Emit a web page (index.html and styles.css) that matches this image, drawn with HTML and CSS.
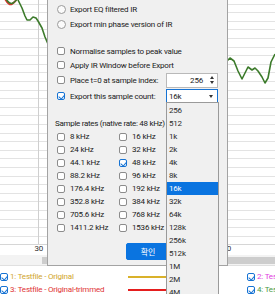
FILE: index.html
```html
<!DOCTYPE html>
<html lang="ko">
<head>
    <meta charset="UTF-8">
    <title>Export IR</title>
    <link rel="stylesheet" href="styles.css">
</head>
<body>
    <div class="app">
        <svg class="chart" width="275" height="255" viewBox="0 0 275 255">
            <path class="grid" d="M0 4.5H275M0 12.5H275M0 21.5H275M0 29.5H275M0 38.5H275M0 47.5H275M0 55.5H275M0 64.5H275M0 72.5H275M0 81.5H275M0 90.5H275M0 98.5H275M0 107.5H275M0 115.5H275M0 124.5H275M0 133.5H275M0 141.5H275M0 150.5H275M0 158.5H275M0 167.5H275M0 176.5H275M0 184.5H275M0 193.5H275M0 201.5H275M0 210.5H275M0 219.5H275M0 227.5H275M0 236.5H275"/>
            <path class="grid-v" d="M38.5 0V245"/>
            <path class="axis" d="M0 244.5H275"/>
            <path class="curve-red" d="M5 -1 Q9 6 12 4 T17 -1"/>
            <path class="curve" d="M6 -1 Q10 5 13 3 T17 -1 M18 0 L22 8 L25 16 L27 20 L30 20 L33 17 L36 18 L38 21 L42 28 L45 37 L48 44"/>
            <path class="curve" d="M226 62 L230 58 L234 61 L238 71 L242 79 L245 73 L248 67 L252 70 L255 68 L258 71 L262 77 L265 83 L268 78 L271 62 L275 54"/>
            <text class="tick" x="43" y="251" text-anchor="end">30</text>
            <text class="tick" x="231" y="251" text-anchor="end">40</text>
        </svg>
        <div class="scroll">
            <div class="scroll-thumb"></div>
        </div>
        <div class="legend">
            <div class="legend-item c1"><span class="box checked"></span>1: Testfile - Original</div>
            <div class="legend-line"><span class="swatch c1"></span></div>
            <div class="legend-item c2"><span class="box checked"></span>2: Testfile - Original</div>
            <div class="legend-item c3"><span class="box checked"></span>3: Testfile - Original-trimmed</div>
            <div class="legend-line"><span class="swatch c3"></span></div>
            <div class="legend-item c4"><span class="box checked"></span>4: Testfile - Original-trimmed</div>
        </div>

        <div class="dialog">
            <div class="row"><span class="ind"><span class="radio"></span></span>Export EQ filtered IR</div>
            <div class="row"><span class="ind"><span class="radio"></span></span>Export min phase version of IR</div>

            <div class="group">
                <div class="row"><span class="ind"><span class="box"></span></span>Normalise samples to peak value</div>
                <div class="row"><span class="ind"><span class="box"></span></span>Apply IR Window before Export</div>
                <div class="row field-row">
                    <span class="field-label"><span class="ind"><span class="box"></span></span>Place t=0 at sample index:</span>
                    <span class="spin">256<span class="spin-arrows"><span class="up"></span><span class="down"></span></span></span>
                </div>
                <div class="row field-row">
                    <span class="field-label"><span class="ind"><span class="box checked"></span></span>Export this sample count:</span>
                    <span class="combo">16k<span class="down"></span></span>
                </div>
            </div>

            <div class="rates-title">Sample rates (native rate: 48 kHz)</div>
            <div class="rates">
                <div class="rate"><span class="ind"><span class="box"></span></span>8 kHz</div>
                <div class="rate"><span class="ind"><span class="box"></span></span>16 kHz</div>
                <div class="rate"><span class="ind"><span class="box"></span></span>24 kHz</div>
                <div class="rate"><span class="ind"><span class="box"></span></span>32 kHz</div>
                <div class="rate"><span class="ind"><span class="box"></span></span>44.1 kHz</div>
                <div class="rate"><span class="ind"><span class="box checked"></span></span>48 kHz</div>
                <div class="rate"><span class="ind"><span class="box"></span></span>88.2 kHz</div>
                <div class="rate"><span class="ind"><span class="box"></span></span>96 kHz</div>
                <div class="rate"><span class="ind"><span class="box"></span></span>176.4 kHz</div>
                <div class="rate"><span class="ind"><span class="box"></span></span>192 kHz</div>
                <div class="rate"><span class="ind"><span class="box"></span></span>352.8 kHz</div>
                <div class="rate"><span class="ind"><span class="box"></span></span>384 kHz</div>
                <div class="rate"><span class="ind"><span class="box"></span></span>705.6 kHz</div>
                <div class="rate"><span class="ind"><span class="box"></span></span>768 kHz</div>
                <div class="rate"><span class="ind"><span class="box"></span></span>1411.2 kHz</div>
                <div class="rate"><span class="ind"><span class="box"></span></span>1536 kHz</div>
            </div>

            <div class="buttons">
                <button class="btn primary">확인</button>
                <button class="btn">취소</button>
            </div>
        </div>

        <div class="popup">
            <div class="item">256</div>
            <div class="item">512</div>
            <div class="item">1k</div>
            <div class="item">2k</div>
            <div class="item">4k</div>
            <div class="item">8k</div>
            <div class="item selected">16k</div>
            <div class="item">32k</div>
            <div class="item">64k</div>
            <div class="item">128k</div>
            <div class="item">256k</div>
            <div class="item">512k</div>
            <div class="item">1M</div>
            <div class="item">2M</div>
            <div class="item">4M</div>
        </div>
    </div>
</body>
</html>
```

FILE: styles.css
```css
* {
    box-sizing: border-box;
}
body {
    margin: 0;
    font-family: Roboto, "Noto Sans CJK KR", sans-serif;
    font-size: 8px;
    letter-spacing: -0.2px;
    color: #1a1a1a;
}
.app {
    position: relative;
    width: 275px;
    height: 294px;
    overflow: hidden;
    background: #fff;
}
.chart {
    display: block;
}
.grid {
    stroke: #e3e3e3;
    stroke-width: 1;
}
.grid-v {
    stroke: #cfcfcf;
    stroke-width: 1;
}
.axis {
    stroke: #d6d6d6;
}
.curve {
    fill: none;
    stroke: #3d7b2c;
    stroke-width: 1.6;
    stroke-linejoin: round;
}
.curve-red {
    fill: none;
    stroke: #d8322c;
    stroke-width: 1.8;
}
.tick {
    font-family: Roboto, sans-serif;
    font-size: 8px;
    fill: #333;
}
.scroll {
    height: 11px;
    padding: 2px 0 2px 42px;
    background: #f3f3f3;
    border-bottom: 1px solid #e0e0e0;
}
.scroll-thumb {
    height: 7px;
    background: #cdcdcd;
}
.legend {
    display: grid;
    grid-template-columns: 128px 119px 1fr;
    grid-auto-rows: 13px;
    padding-top: 4px;
    white-space: nowrap;
}
.legend-item {
    display: flex;
    align-items: center;
    gap: 2px;
}
.legend-line {
    display: flex;
    align-items: center;
}
.swatch {
    width: 72px;
    height: 2px;
}
.swatch.c1 { background: #d9b12a; }
.swatch.c3 { background: #e51e1e; }
.c1 { color: #d1a52c; }
.c2 { color: #e040e0; }
.c3 { color: #e03434; }
.c4 { color: #4c9a45; }

/* widgets */
.ind {
    width: 13px;
    flex: none;
    display: flex;
    align-items: center;
}
.radio {
    width: 9px;
    height: 9px;
    border: 1px solid #9a9a9a;
    border-radius: 50%;
    background: #fbfbfb;
}
.box {
    position: relative;
    width: 8px;
    height: 8px;
    flex: none;
    border: 1px solid #8c8c8c;
    border-radius: 2px;
    background: #fff;
}
.box.checked {
    border-color: #1673d4;
}
.box.checked::after {
    content: "";
    position: absolute;
    left: 1.5px;
    top: 0;
    width: 2.5px;
    height: 4.5px;
    border: solid #1673d4;
    border-width: 0 1.2px 1.2px 0;
    transform: rotate(40deg);
}

/* dialog */
.dialog {
    position: absolute;
    left: 47px;
    top: 0;
    width: 181px;
    height: 266px;
    padding: 2px 9px 0 9px;
    background: #f0f0f0;
    border: 1px solid #a3a3a3;
    border-top: none;
    white-space: nowrap;
}
.row {
    display: flex;
    align-items: center;
    height: 15px;
}
.group {
    margin-top: 12px;
}
.group .row {
    height: 14px;
}
.group .field-row {
    height: 16px;
    justify-content: space-between;
}
.field-label {
    display: flex;
    align-items: center;
}
.spin, .combo {
    position: relative;
    display: flex;
    align-items: center;
    width: 52px;
    height: 15px;
    background: #fff;
    border: 1px solid #b9b9b9;
}
.spin {
    justify-content: flex-end;
    padding-right: 14px;
}
.spin-arrows {
    position: absolute;
    right: 3px;
    top: 2px;
    display: flex;
    flex-direction: column;
    gap: 2px;
}
.up {
    border: 2.5px solid transparent;
    border-top: none;
    border-bottom: 3px solid #333;
}
.down {
    border: 2.5px solid transparent;
    border-bottom: none;
    border-top: 3px solid #333;
}
.combo {
    padding-left: 2px;
    border-color: #1673d4;
}
.combo .down {
    position: absolute;
    right: 4px;
    top: 5px;
}
.rates-title {
    margin: 13px 0 0 -2px;
    height: 13px;
    line-height: 13px;
    letter-spacing: -0.3px;
}
.rates {
    display: grid;
    grid-template-columns: 62px 1fr;
    grid-auto-rows: 13px;
}
.rate {
    display: flex;
    align-items: center;
}
.buttons {
    display: flex;
    justify-content: flex-end;
    gap: 4px;
    margin-top: 9px;
}
.btn {
    width: 44px;
    height: 17px;
    padding: 0;
    font: inherit;
    border: 1px solid #adadad;
    border-radius: 2px;
    background: #e1e1e1;
    color: #1e1e1e;
}
.btn.primary {
    background: #0a74e0;
    border-color: #0a74e0;
    color: #fff;
}

/* combo popup */
.popup {
    position: absolute;
    left: 166px;
    top: 102px;
    width: 53px;
    height: 200px;
    padding-top: 1px;
    background: #f0f0f0;
    border: 1px solid #9a9a9a;
}
.item {
    height: 13px;
    line-height: 13px;
    padding-left: 2px;
    color: #2a2a2a;
}
.item.selected {
    background: #0a74e0;
    color: #fff;
}
```
